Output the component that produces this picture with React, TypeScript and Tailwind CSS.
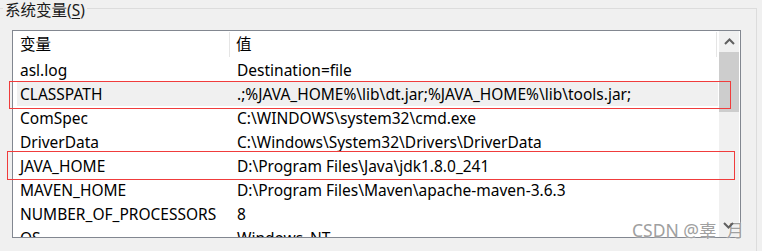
import React from "react";

const rows: [string, string][] = [
  ["asl.log", "Destination=file"],
  ["CLASSPATH", ".;%JAVA_HOME%\\lib\\dt.jar;%JAVA_HOME%\\lib\\tools.jar;"],
  ["ComSpec", "C:\\WINDOWS\\system32\\cmd.exe"],
  ["DriverData", "C:\\Windows\\System32\\Drivers\\DriverData"],
  ["JAVA_HOME", "D:\\Program Files\\Java\\jdk1.8.0_241"],
  ["MAVEN_HOME", "D:\\Program Files\\Maven\\apache-maven-3.6.3"],
  ["NUMBER_OF_PROCESSORS", "8"],
  ["OS", "Windows_NT"],
];

const font = {
  fontFamily: '"Noto Sans", "Noto Sans CJK SC", sans-serif',
};

export default function App() {
  return (
    <div
      className="relative w-[762px] h-[251px] overflow-hidden bg-[#f0f0f0] text-[15.5px] text-black"
      style={font}
    >
      {/* group box */}
      <div className="absolute left-[-20px] top-[8px] w-[777px] h-[260px] border-t border-r border-[#dcdcdc]" />
      <div className="absolute z-10 left-[3px] top-[0px] px-[2px] bg-[#f0f0f0] leading-[20px] text-[15.5px] text-[#1a1a1a]">
        系统变量(<span className="underline underline-offset-2">S</span>)
      </div>

      <div className="pt-[30px] pl-[12px]">
        <div className="w-[729px] h-[208px] border border-[#828790] bg-white flex overflow-hidden">
          <div className="flex-1 flex flex-col">
            <div className="h-[27px] flex shrink-0 items-stretch">
              <div className="w-[217px] pl-[7px] flex items-center border-r border-[#e5e5e5] my-[1px]">
                变量
              </div>
              <div className="w-[487px] pl-[6px] flex items-center border-r border-[#e5e5e5] my-[1px]">
                值
              </div>
            </div>
            {rows.map(([k, v], i) => (
              <div
                key={k}
                className={
                  "h-[24px] shrink-0 flex items-center pt-[2px] ml-[4px] mr-[1px] whitespace-nowrap " +
                  (i === 1 ? "bg-[#f0f0f0]" : "")
                }
              >
                <div className="w-[213px] pl-[3px]">{k}</div>
                <div className="pl-[7px]">{v}</div>
              </div>
            ))}
          </div>
          <div className="w-[20px] mr-[1px] bg-[#f0f0f0] flex flex-col">
            <div className="h-[21px] flex items-center justify-center">
              <svg width="11" height="7" viewBox="0 0 11 7">
                <path d="M1 6 L5.5 1.5 L10 6" stroke="#606060" strokeWidth="2" fill="none" />
              </svg>
            </div>
            <div className="h-[60px] bg-[#cdcdcd]" />
            <div className="flex-1" />
          </div>
        </div>
      </div>

      {/* red highlight boxes */}
      <div className="absolute left-[9px] top-[81px] w-[722px] h-[28px] border border-[#f03c3c]" />
      <div className="absolute left-[7px] top-[151px] w-[728px] h-[29px] border border-[#f03c3c]" />

      {/* watermark */}
      <div
        className="absolute left-[632px] top-[219px] flex text-[17.5px] leading-[22px] text-[#a0a0a0] whitespace-nowrap"
        style={{ textShadow: "0 0 2px #ffffff" }}
      >
        <span>CSDN @辜</span>
        <span className="ml-[10px]">月</span>
      </div>
      {/* scrollbar down arrow (drawn over watermark gap) */}
      <svg
        className="absolute left-[723px] top-[222px]"
        width="11"
        height="7"
        viewBox="0 0 11 7"
      >
        <path d="M1 1 L5.5 5.5 L10 1" stroke="#606060" strokeWidth="2" fill="none" />
      </svg>
    </div>
  );
}
